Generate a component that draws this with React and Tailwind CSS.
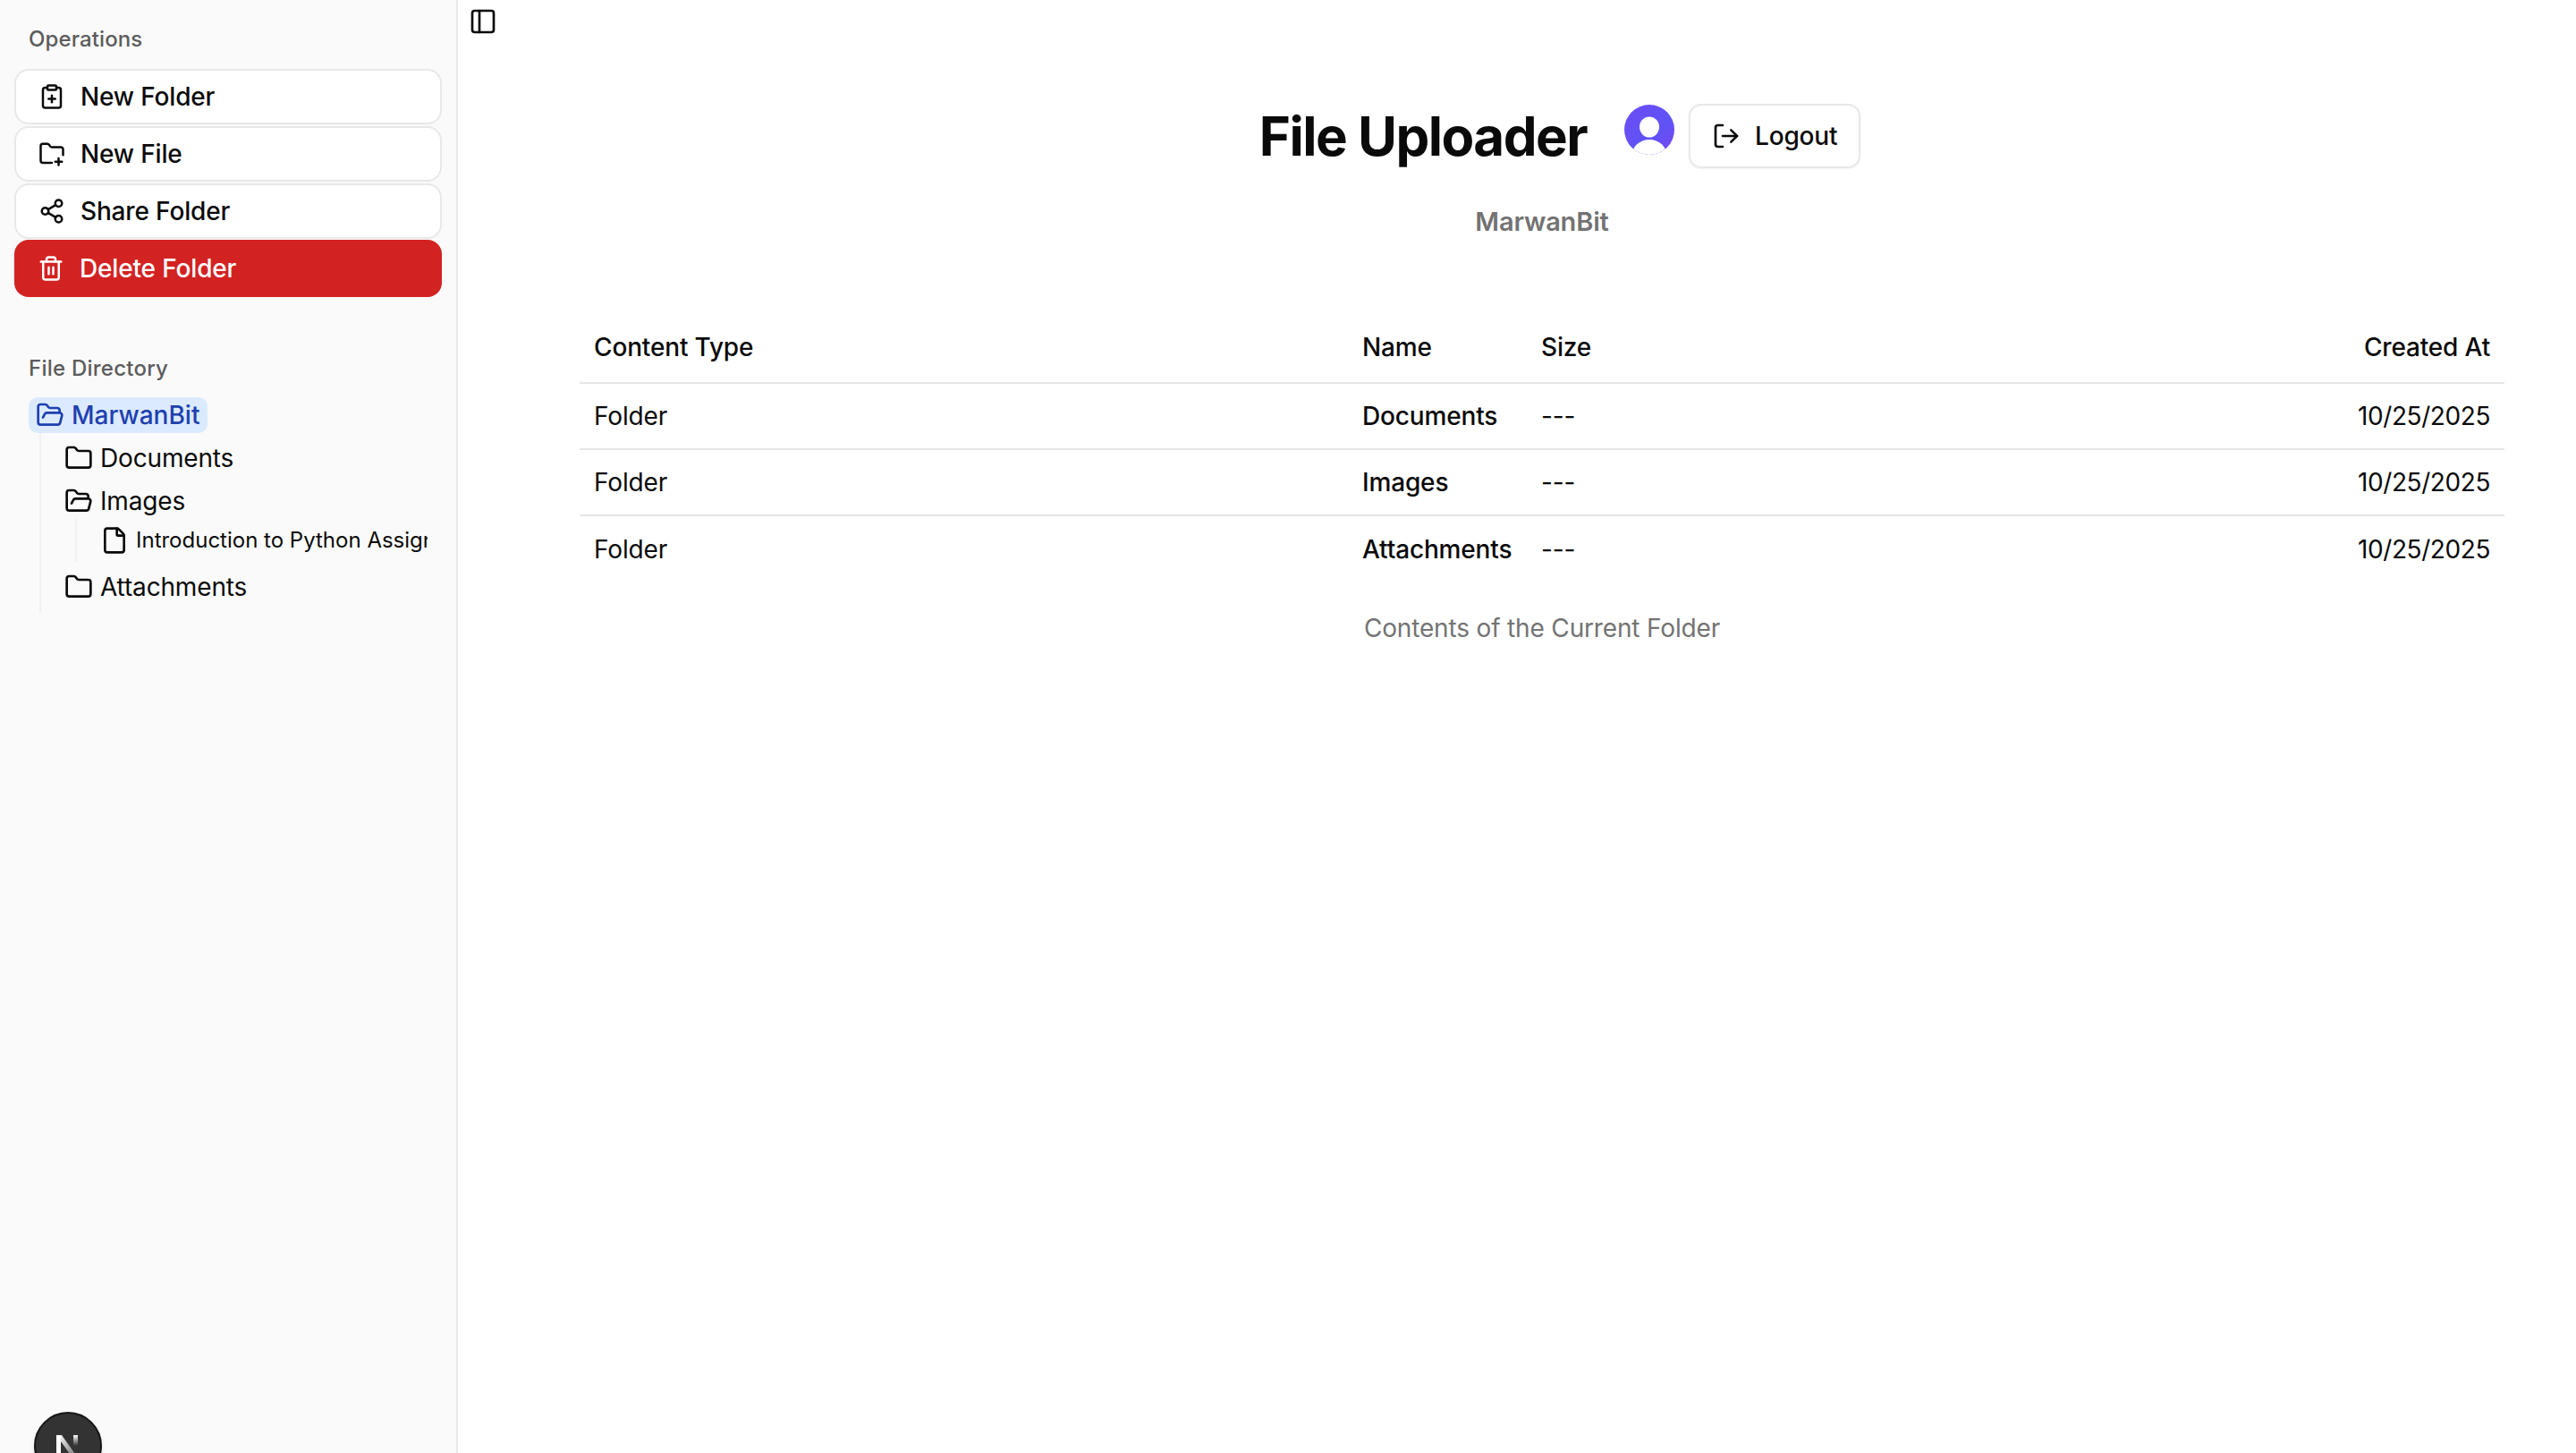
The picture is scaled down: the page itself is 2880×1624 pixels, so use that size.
import { ClipboardPlus, File, Folder, FolderOpen, LogOut, PanelLeft, Share2, Trash2 } from 'lucide-react'

const rows = ['Documents', 'Images', 'Attachments']

function FolderAddIcon() {
  return (
    <svg width="30" height="30" viewBox="0 0 24 24" fill="none" stroke="currentColor" strokeWidth="2" strokeLinecap="round" strokeLinejoin="round">
      <path d="M12 20H4a2 2 0 0 1-2-2V5a2 2 0 0 1 2-2h3.9a2 2 0 0 1 1.69.9l.81 1.2a2 2 0 0 0 1.67.9H20a2 2 0 0 1 2 2v5" />
      <path d="M18 16v6" />
      <path d="M15 19h6" />
    </svg>
  )
}

function Avatar() {
  return (
    <svg width="56" height="56" viewBox="0 0 56 56" className="shrink-0 -mt-[14px]">
      <defs>
        <linearGradient id="avatarBg" x1="0" y1="0" x2="1" y2="1">
          <stop offset="0" stopColor="#6d4cf6" />
          <stop offset="0.6" stopColor="#5f53f5" />
          <stop offset="1" stopColor="#7a45ee" />
        </linearGradient>
        <clipPath id="avatarClip">
          <circle cx="28" cy="28" r="28" />
        </clipPath>
      </defs>
      <circle cx="28" cy="28" r="28" fill="url(#avatarBg)" />
      <g clipPath="url(#avatarClip)" fill="#ffffff">
        <ellipse cx="28" cy="25" rx="11" ry="11.5" />
        <ellipse cx="28" cy="58" rx="20" ry="19" />
      </g>
    </svg>
  )
}

function ActionButton({ icon, label }) {
  return (
    <button className="my-px flex h-[62px] items-center gap-[17px] rounded-[16px] border-2 border-[#e8e8e8] bg-white pl-[25px] text-[28px] font-medium text-[#0a0a0a]">
      {icon}
      {label}
    </button>
  )
}

function TreeItem({ icon, label }) {
  return (
    <div className="flex h-12 items-center gap-2 text-[28px] text-[#0a0a0a]">
      {icon}
      <span>{label}</span>
    </div>
  )
}

export default function App() {
  return (
    <div className="relative flex h-[1624px] overflow-hidden bg-white font-['Inter',sans-serif] tracking-[-0.01em]">
      {/* Sidebar */}
      <aside className="flex w-[512px] shrink-0 flex-col border-r-2 border-[#e8e8e8] bg-[#fafafa] px-4">
        <div className="flex h-[76px] items-end pb-4 pl-4 text-[24px] font-medium leading-8 tracking-[0.005em] text-[#5c5c5c]">Operations</div>
        <div className="flex flex-col">
          <ActionButton icon={<ClipboardPlus size={30} />} label="New Folder" />
          <ActionButton icon={<FolderAddIcon />} label="New File" />
          <ActionButton icon={<Share2 size={30} />} label="Share Folder" />
          <button className="flex h-16 items-center gap-[17px] rounded-[16px] bg-[#d32222] pl-[26px] text-[28px] font-medium text-white">
            <Trash2 size={30} />
            Delete Folder
          </button>
        </div>

        <div className="mt-16 pl-4 text-[24px] font-medium leading-8 tracking-[0.01em] text-[#5c5c5c]">File Directory</div>
        <div className="mt-4 pl-4">
          <div className="flex h-10 w-[200px] items-center gap-2 rounded-[10px] bg-[#dbeafe] pl-2 text-[28px] font-medium tracking-normal text-[#1e40af]">
            <FolderOpen size={32} />
            MarwanBit
          </div>
          <div className="ml-3 w-[432px] border-l-2 border-[#f1f1f1] pl-[26px] pt-1 pb-[5px]">
            <TreeItem icon={<Folder size={32} />} label="Documents" />
            <TreeItem icon={<FolderOpen size={32} />} label="Images" />
            <div className="ml-3 -mt-1 mb-1 h-12 border-l-2 border-[#f1f1f1] pl-[26px]">
              <div className="flex h-12 w-[366px] items-center gap-2 overflow-hidden whitespace-nowrap text-[24px] tracking-normal text-[#0a0a0a]">
                <File size={32} className="shrink-0" />
                <span>Introduction to Python Assignment</span>
              </div>
            </div>
            <TreeItem icon={<Folder size={32} />} label="Attachments" />
          </div>
        </div>
      </aside>

      {/* Main */}
      <main className="min-w-0 flex-1">
        <div className="flex h-12 items-center pl-3 text-[#0a0a0a]">
          <PanelLeft size={32} />
        </div>

        <div className="pl-[136px] pr-20">
          <div className="mt-[68px] flex h-[72px] items-center justify-center pl-10">
            <h1 className="text-[60px] font-bold leading-none tracking-tight text-[#0a0a0a]">File Uploader</h1>
            <div className="ml-[42px] mr-4 flex">
              <Avatar />
            </div>
            <button className="flex h-[72px] w-[192px] items-center justify-center gap-4 rounded-[14px] border-2 border-[#e8e8e8] bg-white text-[28px] font-medium text-[#0a0a0a] shadow-xs">
              <LogOut size={32} />
              Logout
            </button>
          </div>
          <p className="mt-10 text-center text-[29px] font-semibold leading-10 text-[#737373]">MarwanBit</p>

          <table className="mt-20 w-full text-[28px] text-[#0a0a0a]">
            <thead>
              <tr className="h-20 border-b-2 border-[#e5e5e5]">
                <th className="w-[859px] px-4 text-left font-medium">Content Type</th>
                <th className="w-[200px] px-4 text-left font-medium">Name</th>
                <th className="px-4 text-left font-medium">Size</th>
                <th className="px-4 text-right font-medium">Created At</th>
              </tr>
            </thead>
            <tbody>
              {rows.map((name) => (
                <tr key={name} className="h-[74px] border-b-2 border-[#e5e5e5] last:border-b-0">
                  <td className="px-4">Folder</td>
                  <td className="px-4 font-medium">{name}</td>
                  <td className="px-4">---</td>
                  <td className="px-4 text-right tracking-[-0.015em]">10/25/2025</td>
                </tr>
              ))}
            </tbody>
          </table>
          <p className="mt-8 text-center text-[28px] leading-10 text-[#737373]">Contents of the Current Folder</p>
        </div>
      </main>

      {/* Dev indicator */}
      <div className="absolute left-[38px] top-[1578px] flex h-[76px] w-[76px] items-center justify-center rounded-full border-2 border-[#161616] bg-[#333333] shadow-md">
        <svg width="40" height="40" viewBox="0 0 40 40" fill="none">
          <defs>
            <linearGradient id="nFade" x1="0" y1="0" x2="1" y2="1">
              <stop offset="0" stopColor="#ffffff" />
              <stop offset="1" stopColor="#ffffff" stopOpacity="0.2" />
            </linearGradient>
            <linearGradient id="nBar" x1="0" y1="0" x2="0" y2="1">
              <stop offset="0" stopColor="#ffffff" />
              <stop offset="0.6" stopColor="#ffffff" stopOpacity="0" />
            </linearGradient>
          </defs>
          <path d="M7 8h5v25H7z" fill="#ffffff" />
          <path d="M7 8h6l20 28h-6z" fill="url(#nFade)" />
          <path d="M26 8h5v20h-5z" fill="url(#nBar)" />
        </svg>
      </div>
    </div>
  )
}
